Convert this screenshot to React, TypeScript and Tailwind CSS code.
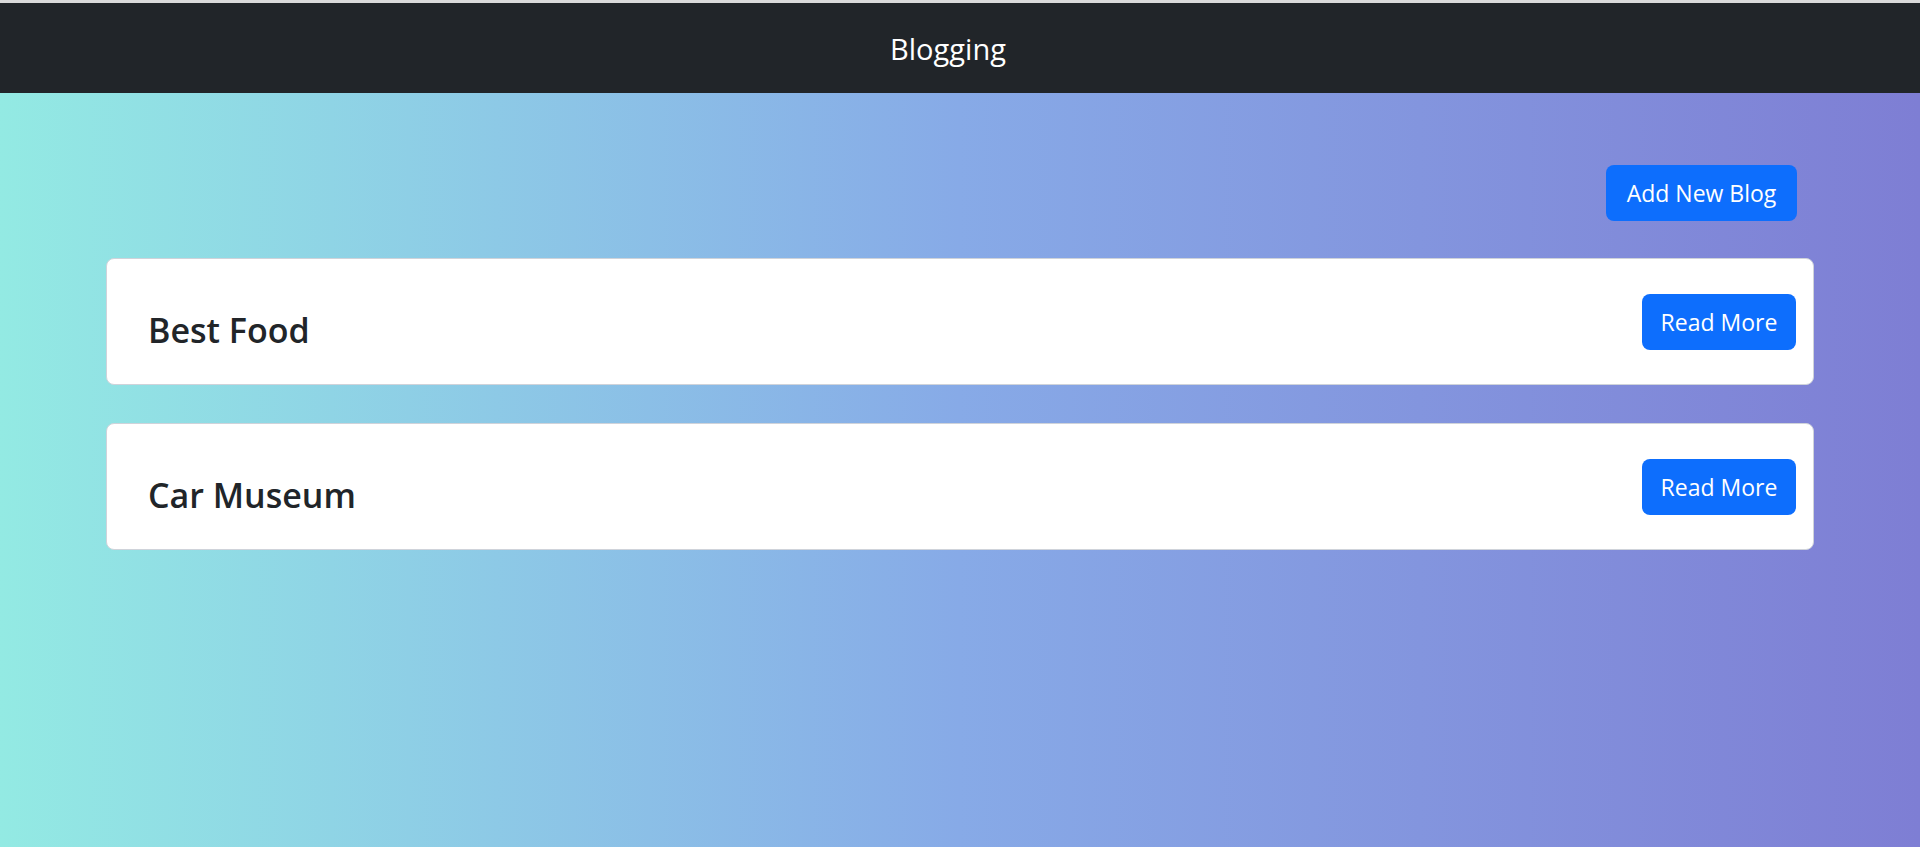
const blogs = [
  { id: 1, title: "Best Food" },
  { id: 2, title: "Car Museum" },
];

export default function App() {
  return (
    <div className="min-h-screen flex flex-col font-['Open_Sans',sans-serif]">
      <div className="h-[3px] bg-[#dadada]" />
      {/* Navbar */}
      <nav className="h-[90px] bg-[#212529] flex items-center justify-center pr-[24px]">
        <span className="text-white text-[29px] leading-none">Blogging</span>
      </nav>

      <main className="flex-1 bg-gradient-to-r from-[#93eae3] via-[#87aae7] to-[#7e7ed4] px-[106px] pt-[72px]">
        <div className="flex justify-end pr-[17px]">
          <button className="h-[56px] w-[191px] rounded-[8px] bg-[#0d6efd] text-white text-[23px]">
            Add New Blog
          </button>
        </div>

        <div className="mt-[37px] flex flex-col gap-[38px]">
          {blogs.map((blog) => (
            <div
              key={blog.id}
              className="h-[127px] bg-white border border-[#cfd3da] rounded-[8px] flex justify-between items-start pl-[41px] pr-[17px] pt-[35px]"
            >
              <h2 className="mt-[12px] text-[34px] font-semibold leading-[48px] text-[#212529]">
                {blog.title}
              </h2>
              <button className="h-[56px] w-[154px] rounded-[8px] bg-[#0d6efd] text-white text-[23px]">
                Read More
              </button>
            </div>
          ))}
        </div>
      </main>
    </div>
  );
}
